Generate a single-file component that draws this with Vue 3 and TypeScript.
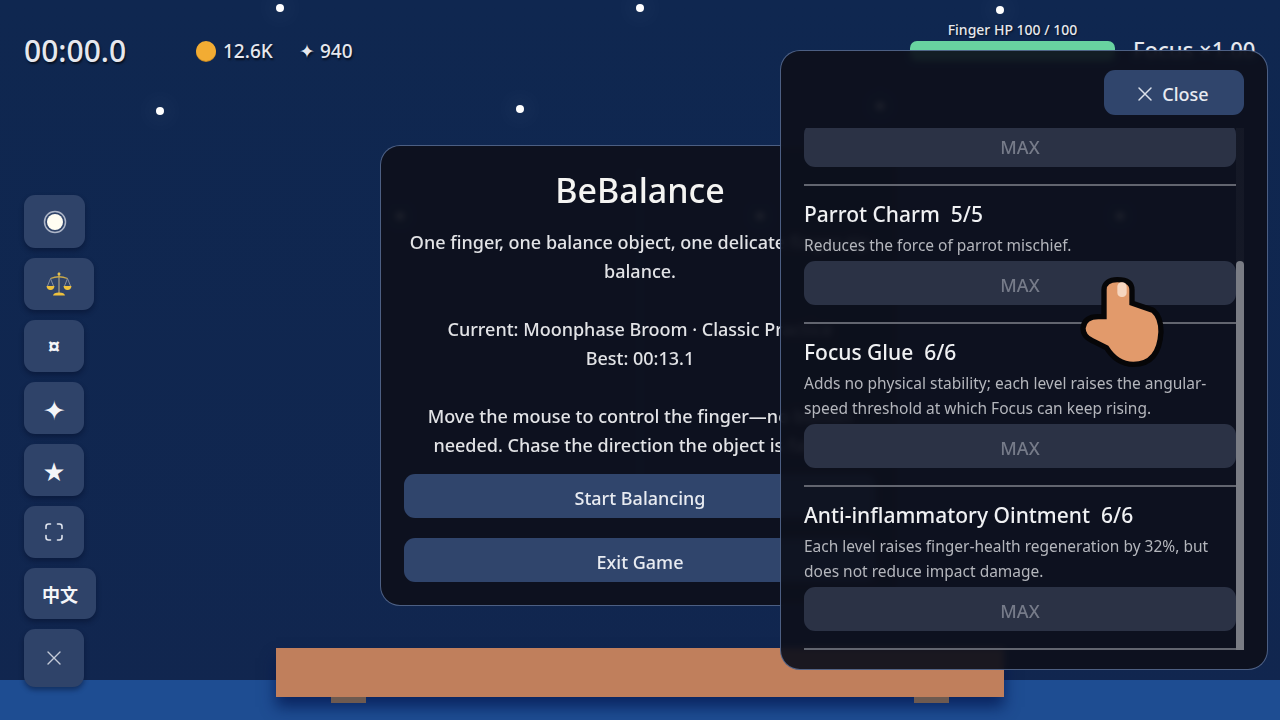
<template>
  <div class="game">
    <!-- scene behind the dialogs -->
    <span v-for="(s, i) in stars" :key="i" class="star" :style="{ left: s.x + 'px', top: s.y + 'px' }"></span>
    <div class="floor"></div>
    <div class="broom"></div>
    <div class="platform">
      <i class="foot foot-l"></i>
      <i class="foot foot-r"></i>
    </div>

    <!-- hud -->
    <div class="hud-left">
      <span class="timer">00:00.0</span>
      <span class="coins"><i class="coin"></i>12.6K</span>
      <span class="sparks">✦ 940</span>
    </div>
    <div class="hud-hp">
      <span class="hp-label">Finger HP 100 / 100</span>
      <div class="hp-bar"></div>
    </div>
    <div class="hud-focus">Focus ×1.00</div>

    <div class="side">
      <button class="tool tool-orb">
        <svg width="24" height="24" viewBox="0 0 24 24">
          <circle cx="12" cy="12" r="10.5" fill="none" stroke="#aeb6c8" stroke-width="1.5" />
          <circle cx="12" cy="12" r="8" fill="#fffdf2" />
        </svg>
      </button>
      <button class="tool tool-scale">
        <svg width="26" height="26" viewBox="0 0 26 26" fill="none">
          <path d="M13 1.500V22" stroke="#8f8a78" stroke-width="1.600" />
          <circle cx="13" cy="3" r="1.500" fill="#e8c14a" />
          <path d="M4.500 7.500Q13 4 21.500 7.500" stroke="#c9a94a" stroke-width="1.300" />
          <path d="M4.500 7.500L1.500 15M4.500 7.500L7.500 15M21.500 7.500L18.500 15M21.500 7.500L24.500 15" stroke="#8f94a0" stroke-width="0.900" />
          <path d="M0.500 15H8.500Q8 19 4.500 19Q1 19 0.500 15ZM17.500 15H25.500Q25 19 21.500 19Q18 19 17.500 15Z" fill="#efc23c" />
          <path d="M7 24.500Q7.500 21.500 13 21.500Q18.500 21.500 19 24.500Z" fill="#efc23c" />
        </svg>
      </button>
      <button class="tool tool-glyph tool-cur">¤</button>
      <button class="tool tool-glyph tool-spark">✦</button>
      <button class="tool tool-glyph">★</button>
      <button class="tool">
        <svg width="20" height="20" viewBox="0 0 20 20" fill="none" stroke="#dfe4ee" stroke-width="1.600" stroke-linecap="round">
          <path d="M2 6.500V4.500a2.500 2.500 0 0 1 2.500-2.500H6.500M13.500 2h2a2.500 2.500 0 0 1 2.500 2.500V6.500M18 13.500v2a2.500 2.500 0 0 1-2.500 2.500h-2M6.500 18h-2A2.500 2.500 0 0 1 2 15.500v-2" />
        </svg>
      </button>
      <button class="tool tool-lang">中文</button>
      <button class="tool tool-x">
        <svg width="16" height="16" viewBox="0 0 16 16" stroke="#c5cbd8" stroke-width="1.400" stroke-linecap="round">
          <path d="M2 2l12 12M14 2L2 14" />
        </svg>
      </button>
    </div>

    <!-- start dialog -->
    <section class="start">
      <h1>BeBalance</h1>
      <p>One finger, one balance object, one delicate finger-tip balance.</p>
      <p>Current: Moonphase Broom · Classic Practice<br />Best: 00:13.1</p>
      <p>Move the mouse to control the finger—no button needed. Chase the direction the object is falling.</p>
      <button class="wide first">Start Balancing</button>
      <button class="wide">Exit Game</button>
    </section>

    <!-- upgrades drawer -->
    <aside class="drawer">
      <div class="drawer-head">
        <button class="close">
          <svg width="16" height="16" viewBox="0 0 16 16" stroke="#dbe0ea" stroke-width="1.500" stroke-linecap="round">
            <path d="M2 2l12 12M14 2L2 14" />
          </svg>
          Close
        </button>
      </div>
      <div class="list">
        <div class="row row-cut">
          <button class="max">MAX</button>
        </div>
        <div v-for="u in upgrades" :key="u.name" class="row">
          <h3>{{ u.name }}<span>{{ u.level }}</span></h3>
          <p>{{ u.desc }}</p>
          <button class="max">MAX</button>
        </div>
        <div class="thumb"></div>
      </div>
    </aside>

    <svg class="hand" width="240" height="130" viewBox="0 0 720 390">
      <path
        d="M200 120Q200 97 232 97Q268 97 268 120V165L335 188Q355 205 355 245Q350 335 280 335Q235 335 205 287L160 265Q137 255 137 235Q140 208 175 208L200 208Z"
        fill="#e29a6b"
        stroke="#060608"
        stroke-width="32"
        stroke-linejoin="round"
      />
      <rect x="232" y="97" width="28" height="44" rx="13" fill="#f6d6c0" />
    </svg>
  </div>
</template>

<script setup lang="ts">
const stars = [
  { x: 280, y: 8 },
  { x: 640, y: 8 },
  { x: 1000, y: 10 },
  { x: 160, y: 111 },
  { x: 520, y: 109 },
  { x: 880, y: 106 },
  { x: 400, y: 216 },
  { x: 760, y: 216 },
  { x: 1120, y: 216 }
]

const upgrades = [
  { name: 'Parrot Charm', level: '5/5', desc: 'Reduces the force of parrot mischief.' },
  {
    name: 'Focus Glue',
    level: '6/6',
    desc: 'Adds no physical stability; each level raises the angular-speed threshold at which Focus can keep rising.'
  },
  {
    name: 'Anti-inflammatory Ointment',
    level: '6/6',
    desc: 'Each level raises finger-health regeneration by 32%, but does not reduce impact damage.'
  }
]
</script>

<style>
html,
body {
  margin: 0;
  background: #10274f;
}
</style>

<style scoped>
.game {
  position: relative;
  width: 1280px;
  height: 720px;
  overflow: hidden;
  background: linear-gradient(#0f2750, #11264f);
  font-family: "Noto Sans", "Open Sans", "Noto Sans CJK SC", sans-serif;
  color: #e6e8ee;
}

button {
  font-family: inherit;
  border: none;
  cursor: pointer;
}

.star {
  position: absolute;
  width: 8px;
  height: 8px;
  margin: -4px 0 0 -4px;
  border-radius: 50%;
  background: #fff;
  box-shadow: 0 0 22px 10px rgba(255, 255, 255, 0.035);
}

.floor {
  position: absolute;
  left: 0;
  right: 0;
  top: 680px;
  bottom: 0;
  background: #1e4d92;
}

.broom {
  position: absolute;
  left: 628px;
  top: 170px;
  width: 24px;
  height: 310px;
  background: linear-gradient(90deg, transparent 45%, rgba(120, 130, 150, 0.35) 50%, transparent 55%);
}

.platform {
  position: absolute;
  left: 276px;
  top: 648px;
  width: 728px;
  height: 49px;
  background: #c07f5c;
  box-shadow: 0 10px 14px rgba(4, 24, 80, 0.75);
}

.foot {
  position: absolute;
  top: 49px;
  width: 35px;
  height: 6px;
  background: #6e5a50;
}

.foot-l {
  left: 55px;
}

.foot-r {
  right: 55px;
}

.hud-left {
  position: absolute;
  left: 24px;
  top: 30px;
  display: flex;
  align-items: center;
  text-shadow: 1px 2px 2px rgba(0, 0, 0, 0.6);
}

.timer {
  width: 172px;
  font-size: 30px;
  line-height: 42px;
  font-weight: 500;
}

.coins {
  display: flex;
  align-items: center;
  gap: 7px;
  width: 103px;
  font-size: 19px;
  font-weight: 500;
}

.coin {
  width: 20px;
  height: 20px;
  border-radius: 50%;
  background: #f2ac33;
  box-shadow: 0 1px 0 #c98a22;
}

.sparks {
  font-size: 19px;
  font-weight: 500;
}

.hud-hp {
  position: absolute;
  left: 910px;
  top: 21px;
  width: 205px;
  display: flex;
  flex-direction: column;
  align-items: center;
  gap: 2px;
}

.hp-label {
  font-size: 14px;
  line-height: 18px;
  font-weight: 500;
  white-space: nowrap;
  text-shadow: 1px 1px 2px rgba(0, 0, 0, 0.6);
}

.hp-bar {
  width: 100%;
  height: 20px;
  border-radius: 7px;
  background: #68d3a0;
}

.hud-focus {
  position: absolute;
  left: 1133px;
  top: 34px;
  font-size: 22px;
  line-height: 30px;
  font-weight: 500;
  white-space: nowrap;
}

.side {
  position: absolute;
  left: 24px;
  top: 195px;
  display: flex;
  flex-direction: column;
  align-items: flex-start;
  gap: 10px;
}

.tool {
  display: flex;
  align-items: center;
  justify-content: center;
  width: 60px;
  height: 52px;
  padding: 0;
  border-radius: 11px;
  background: #2f4369;
  color: #f4f5f8;
  box-shadow: 0 3px 5px rgba(4, 14, 40, 0.45);
}

.tool-orb {
  width: 61px;
  height: 53px;
}

.tool-scale {
  width: 70px;
}

.tool-glyph {
  font-size: 21px;
}

.tool-cur {
  font-size: 23px;
  font-weight: 700;
}

.tool-spark {
  font-size: 27px;
  line-height: 1;
  padding-top: 2px;
}

.tool-lang {
  width: 72px;
  height: 51px;
  font-family: "Noto Sans CJK SC", sans-serif;
  font-size: 18px;
  font-weight: 700;
}

.tool-x {
  height: 58px;
}

.start {
  position: absolute;
  left: 380px;
  top: 145px;
  width: 520px;
  height: 461px;
  box-sizing: border-box;
  padding: 22px 23px 0;
  border: 1px solid rgba(130, 160, 215, 0.55);
  border-radius: 20px;
  background: rgba(13, 16, 28, 0.93);
  backdrop-filter: blur(3px);
  text-align: center;
}

.start h1 {
  margin: 0 0 16px;
  font-size: 34px;
  line-height: 44px;
  font-weight: 500;
  color: #f4f4f2;
}

.start p {
  margin: 0 0 29px;
  font-size: 18px;
  line-height: 29px;
  font-weight: 500;
  color: #e2e3e6;
}

.wide {
  display: block;
  width: 100%;
  height: 44px;
  margin-top: 20px;
  padding: 3px 0 0;
  border-radius: 11px;
  background: #30456c;
  color: #e8ebf1;
  font-size: 18px;
  font-weight: 500;
}

.wide.first {
  margin-top: -15px;
}

.drawer {
  position: absolute;
  left: 780px;
  top: 50px;
  width: 488px;
  height: 620px;
  box-sizing: border-box;
  padding: 19px 23px 19px 23px;
  display: flex;
  flex-direction: column;
  border: 1px solid rgba(130, 160, 215, 0.55);
  border-radius: 20px;
  background: rgba(13, 16, 28, 0.93);
  backdrop-filter: blur(3px);
}

.drawer-head {
  display: flex;
  justify-content: flex-end;
  height: 58px;
  flex: none;
}

.close {
  display: flex;
  align-items: center;
  justify-content: center;
  gap: 9px;
  width: 140px;
  height: 45px;
  padding: 2px 2px 0 0;
  border-radius: 11px;
  background: #30456c;
  color: #e8ebf1;
  font-size: 18px;
  font-weight: 500;
}

.list {
  position: relative;
  flex: 1;
  overflow: hidden;
  padding-right: 8px;
  background: linear-gradient(90deg, transparent 432px, rgba(255, 255, 255, 0.03) 432px);
}

.row {
  padding: 0 0 17px;
  margin-bottom: 0;
  border-bottom: 2px solid #62656f;
}

.row + .row {
  padding-top: 14px;
}

.row-cut {
  margin-top: -5px;
  padding-bottom: 17px;
}

.row h3 {
  margin: 0 0 5px;
  font-size: 21px;
  line-height: 28px;
  font-weight: 500;
  color: #f0f1f3;
}

.row h3 span {
  margin-left: 11px;
}

.row p {
  margin: 0 0 3px;
  font-size: 15.5px;
  line-height: 25px;
  color: #b4b6bc;
}

.max {
  display: block;
  width: 100%;
  height: 44px;
  padding: 3px 0 0;
  border-radius: 11px;
  background: #2b3245;
  color: #767b89;
  font-size: 18px;
  font-weight: 500;
}

.thumb {
  position: absolute;
  right: 0;
  top: 133px;
  bottom: 0;
  width: 8px;
  border-radius: 4px 4px 0 0;
  background: #797c84;
}

.hand {
  position: absolute;
  left: 1040px;
  top: 250px;
}

.hand path {
  paint-order: stroke;
}
</style>
